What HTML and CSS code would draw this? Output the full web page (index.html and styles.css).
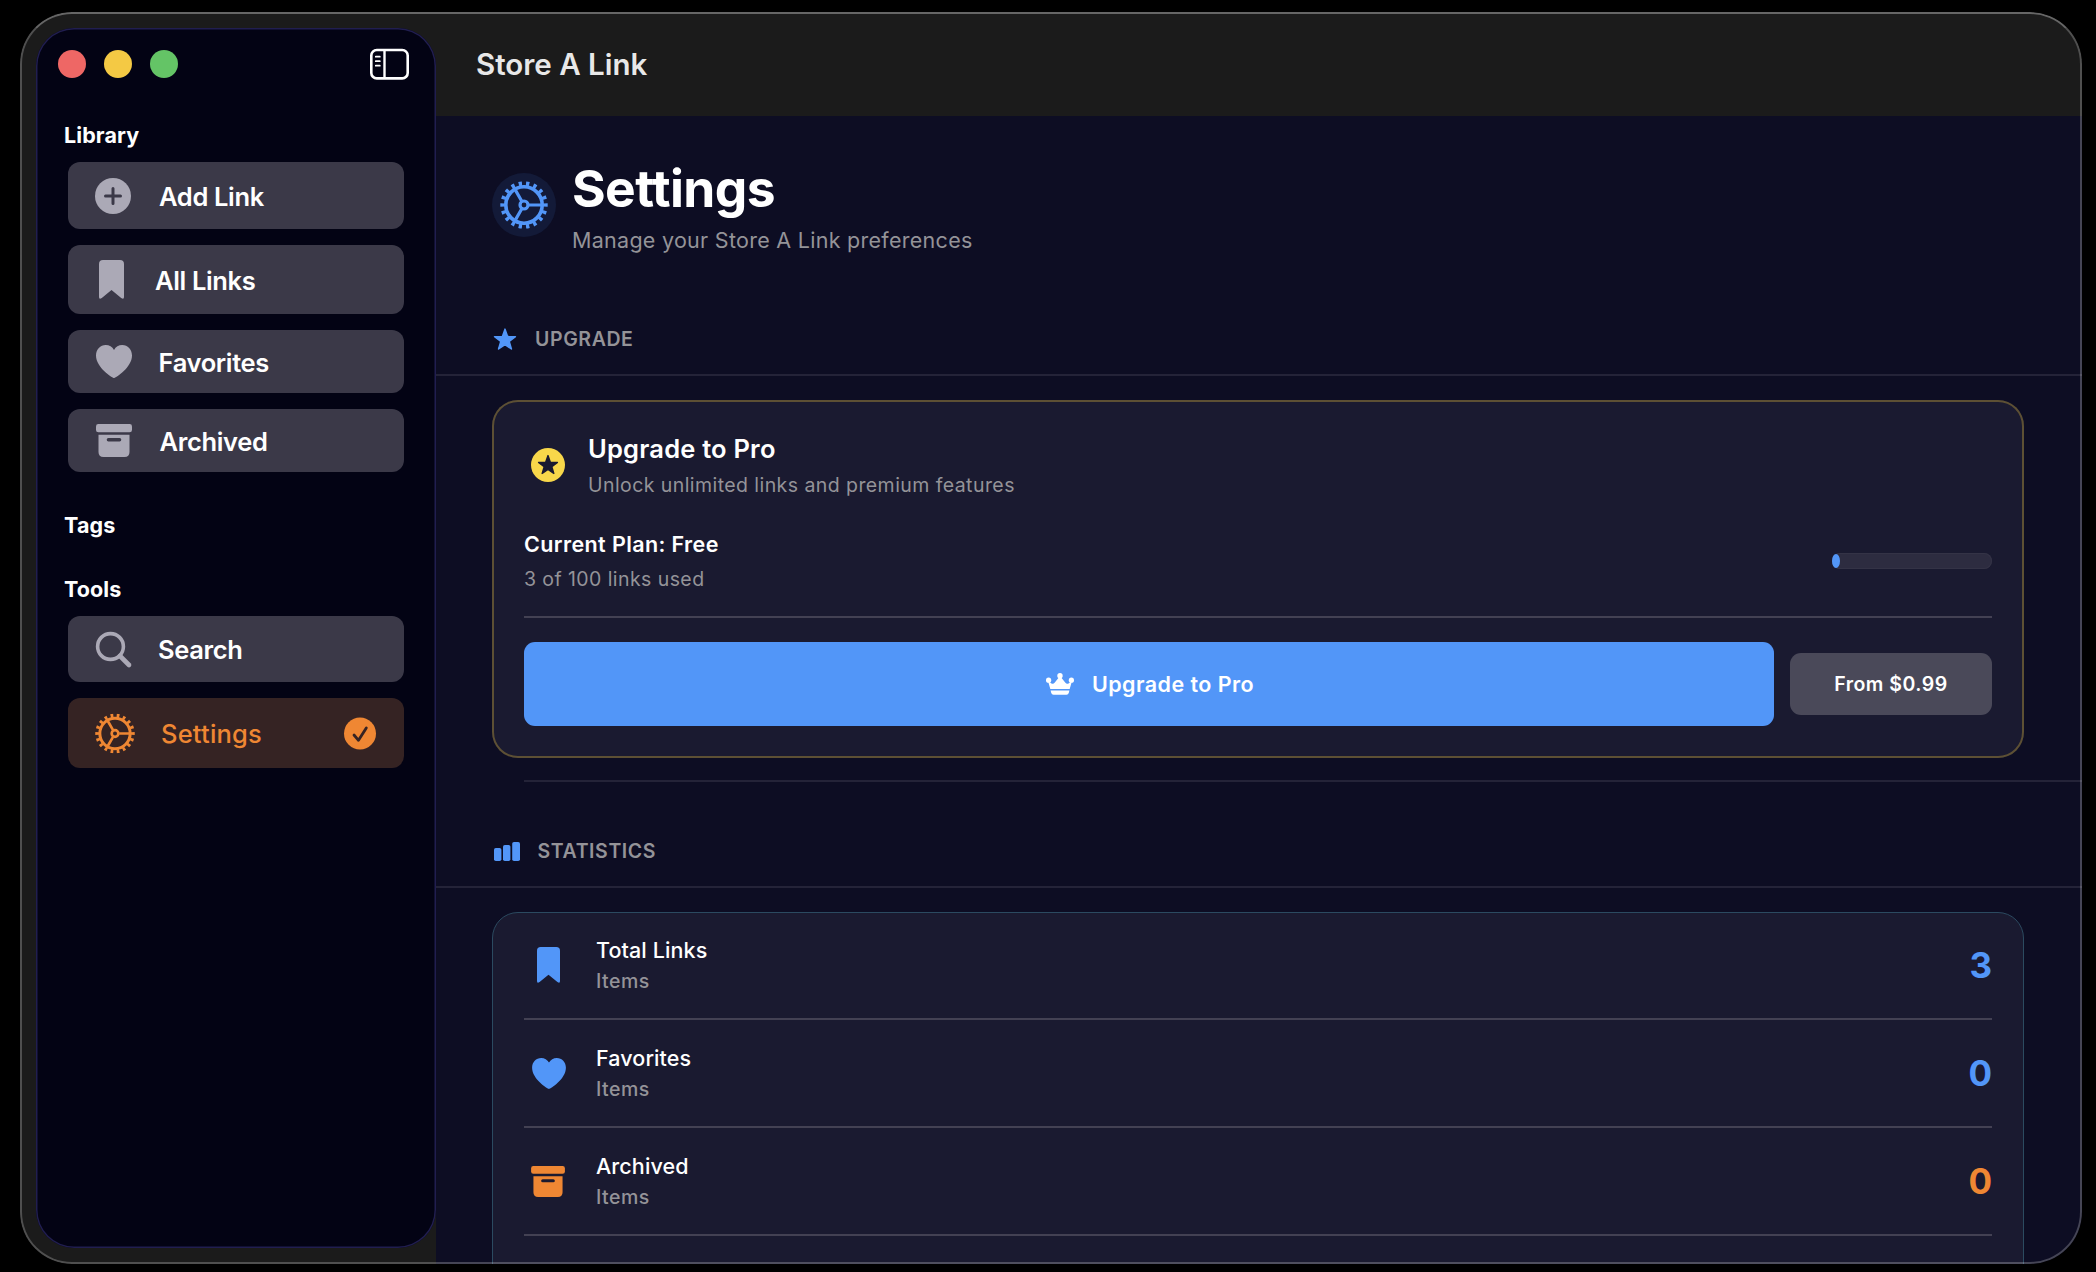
FILE: index.html
```html
<!DOCTYPE html>
<html lang="en">
<head>
  <meta charset="UTF-8" />
  <meta name="viewport" content="width=device-width, initial-scale=1.0"/>
  <title>Store A Link</title>
  <link rel="stylesheet" href="styles.css">
</head>
<body>
  <!-- shared icons -->
  <svg class="sprite" width="0" height="0">
    <symbol id="gear" viewBox="0 0 48 48">
      <g fill="none" stroke="currentColor">
        <circle cx="24" cy="24" r="18.2" stroke-width="3.600"/>
        <circle cx="24" cy="24" r="21.4" stroke-width="4.600" pathLength="180" stroke-dasharray="4.4 5.6" stroke-dashoffset="2.2"/>
        <circle cx="24" cy="24" r="4" stroke-width="3.200"/>
        <path d="M29 24h13M21.5 19.700L15 8.400M21.5 28.300L15 39.600" stroke-width="3.200"/>
      </g>
    </symbol>
    <symbol id="bookmark" viewBox="0 0 25 39">
      <path fill="currentColor" d="M4 0h17q4 0 4 4v33q0 3-2.800 1L12.500 30 2.800 38Q0 40 0 37V4q0-4 4-4z"/>
    </symbol>
    <symbol id="heart" viewBox="0 0 36 33">
      <path fill="currentColor" d="M18 33C16.500 33 0 22.500 0 10.500 0 4.200 4.300 0 9.700 0c3.600 0 6.600 1.900 8.300 4.900C19.700 1.900 22.700 0 26.300 0 31.700 0 36 4.200 36 10.500 36 22.500 19.500 33 18 33z"/>
    </symbol>
    <symbol id="archive" viewBox="0 0 36 33">
      <rect x="0" y="0" width="36" height="8.300" rx="2.400" fill="currentColor"/>
      <path fill="currentColor" fill-rule="evenodd" d="M2.500 10.800h31V28q0 5-5 5h-21q-5 0-5-5zM12.400 14a1.700 1.700 0 0 0 0 3.400h11.200a1.700 1.700 0 0 0 0-3.400z"/>
    </symbol>
    <symbol id="star" viewBox="0 0 24 23">
      <path fill="currentColor" stroke="currentColor" stroke-width="1.600" stroke-linejoin="round" d="M12 1.200l2.700 7.700 8.200.2-6.500 5 2.300 7.800L12 17.300l-6.700 4.600 2.300-7.800-6.500-5 8.200-.2z"/>
    </symbol>
  </svg>

  <div class="window">
    <aside class="sidebar">
      <div class="titlebar">
        <div class="lights">
          <span class="light red"></span>
          <span class="light yellow"></span>
          <span class="light green"></span>
        </div>
        <svg width="39" height="31" viewBox="0 0 39 31" fill="none" stroke="#fff">
          <rect x="1.300" y="1" width="36.400" height="28.400" rx="5.500" stroke-width="2.600"/>
          <path d="M14.500 1.200v28" stroke-width="2.400"/>
          <path d="M5.800 7.700h4M5.800 12.200h4M5.800 16.700h4" stroke-width="1.800" stroke-linecap="round"/>
        </svg>
      </div>

      <h3 class="label">Library</h3>
      <nav class="nav">
        <a class="item h67">
          <svg width="36" height="36" viewBox="0 0 36 36">
            <circle cx="18" cy="18" r="18" fill="currentColor"/>
            <path d="M18 10.500v15M10.500 18h15" stroke="#3b3948" stroke-width="3" stroke-linecap="round"/>
          </svg>
          <span>Add Link</span>
        </a>
        <a class="item h69">
          <svg width="32" height="39"><use href="#bookmark" x="4" width="25" height="39"/></svg>
          <span>All Links</span>
        </a>
        <a class="item h63">
          <svg width="35.500" height="33"><use href="#heart" x="1" width="36" height="33"/></svg>
          <span>Favorites</span>
        </a>
        <a class="item h63">
          <svg width="36.500" height="33"><use href="#archive" x="1" width="36" height="33"/></svg>
          <span>Archived</span>
        </a>
      </nav>

      <h3 class="label tags">Tags</h3>
      <h3 class="label tools">Tools</h3>
      <nav class="nav">
        <a class="item h66">
          <svg width="35" height="35" viewBox="0 0 35 35" fill="none" stroke="currentColor">
            <circle cx="15.500" cy="14.500" r="12.900" stroke-width="3.600"/>
            <path d="M25 24l9 9" stroke-width="4.600" stroke-linecap="round"/>
          </svg>
          <span>Search</span>
        </a>
        <a class="item active">
          <svg width="38" height="40"><use href="#gear" y=".5" width="40" height="40"/></svg>
          <span>Settings</span>
          <svg class="check" width="32" height="32" viewBox="0 0 32 32">
            <circle cx="16" cy="16.500" r="16" fill="currentColor"/>
            <path d="M10 18l4.500 5.300 7.800-12.300" fill="none" stroke="#352323" stroke-width="2.800" stroke-linecap="round" stroke-linejoin="round"/>
          </svg>
        </a>
      </nav>
    </aside>

    <main class="main">
      <header class="header">Store A Link</header>

      <div class="content">
        <div class="page-head">
          <div class="badge"><svg width="48" height="48"><use href="#gear" width="48" height="48"/></svg></div>
          <div>
            <h1>Settings</h1>
            <p class="subtitle">Manage your Store A Link preferences</p>
          </div>
        </div>

        <h2 class="section">
          <svg width="27" height="22"><use href="#star" x="1" width="24" height="22"/></svg>
          <span>UPGRADE</span>
        </h2>
        <div class="card pro">
          <div class="row">
            <div class="icon">
              <svg width="34" height="34" viewBox="0 0 34 34">
                <circle cx="17" cy="17" r="17" fill="#f8d74a"/>
                <g color="#1a1930"><use href="#star" x="6.500" y="6.500" width="21" height="20"/></g>
              </svg>
            </div>
            <div>
              <div class="pro-title">Upgrade to Pro</div>
              <div class="pro-text">Unlock unlimited links and premium features</div>
            </div>
          </div>
          <div class="row plan">
            <div>
              <div class="plan-name">Current Plan: Free</div>
              <div class="plan-text">3 of 100 links used</div>
            </div>
            <div class="progress"><div class="bar"></div></div>
          </div>
          <div class="row buttons">
            <button class="btn-pro">
              <svg width="28" height="22" viewBox="0 0 28 22" fill="#fff">
                <circle cx="2.600" cy="7.200" r="2.600"/>
                <circle cx="14" cy="2.700" r="2.700"/>
                <circle cx="25.400" cy="7.200" r="2.600"/>
                <path d="M2 8l2.300 8h19.400L26 8l-3.500 2.500q-1.800 1-3.300-1L14.800 4h-1.600L8.800 9.500q-1.500 2-3.300 1z"/>
                <path d="M4.600 17.500h18.800l-.6 2.300q-.5 1.900-2.300 1.900h-13q-1.800 0-2.300-1.900z"/>
              </svg>
              <span>Upgrade to Pro</span>
            </button>
            <button class="btn-price">From $0.99</button>
          </div>
        </div>

        <h2 class="section stats">
          <svg width="29.500" height="20" viewBox="0 0 29.500 20" fill="currentColor">
            <rect x="2" y="7" width="7.400" height="13" rx="1.800"/>
            <rect x="11" y="4" width="7.400" height="16" rx="1.800"/>
            <rect x="20.200" y="1" width="7.800" height="19" rx="1.800"/>
          </svg>
          <span>STATISTICS</span>
        </h2>
        <div class="card list">
          <div class="stat">
            <div class="icon"><svg width="23" height="36"><use href="#bookmark" width="23" height="36"/></svg></div>
            <div>
              <div class="name">Total Links</div>
              <div class="unit">Items</div>
            </div>
            <div class="num">3</div>
          </div>
          <div class="stat">
            <div class="icon"><svg width="34" height="31"><use href="#heart" x="1" width="34" height="31"/></svg></div>
            <div>
              <div class="name">Favorites</div>
              <div class="unit">Items</div>
            </div>
            <div class="num">0</div>
          </div>
          <div class="stat orange">
            <div class="icon"><svg width="34" height="31"><use href="#archive" width="34" height="31"/></svg></div>
            <div>
              <div class="name">Archived</div>
              <div class="unit">Items</div>
            </div>
            <div class="num">0</div>
          </div>
        </div>
      </div>
    </main>
  </div>
</body>
</html>
```
FILE: styles.css
```css
* {
  box-sizing: border-box;
}
body {
  margin: 0;
  height: 1272px;
  padding: 12px 14px 8px 20px;
  background: #000;
  font-family: Inter, "Liberation Sans", sans-serif;
  color: white;
  overflow: hidden;
}
h1, h2, h3, p {
  margin: 0;
}
svg {
  display: block;
  flex: none;
  overflow: visible;
}
.sprite {
  position: absolute;
}
.window {
  position: relative;
  display: flex;
  height: 1252px;
  background: #1b1b1b;
  border-radius: 52px;
  overflow: hidden;
}
/* window outline, drawn over the content */
.window::after {
  content: "";
  position: absolute;
  inset: 0;
  border: 2px solid rgba(255,255,255,0.23);
  border-top-color: rgba(255,255,255,0.33);
  border-radius: 52px;
  pointer-events: none;
}

/* Sidebar */
.sidebar {
  width: 400px;
  margin: 16px 0 16px 16px;
  background: #030314;
  border-radius: 38px;
  box-shadow: inset 0 0 0 1.5px #211e50;
}
.titlebar {
  display: flex;
  align-items: center;
  justify-content: space-between;
  height: 72px;
  padding: 0 27px 0 22px;
}
.lights {
  display: flex;
  gap: 18px;
}
.light {
  width: 28px;
  height: 28px;
  border-radius: 50%;
}
.red {
  background: #ee6765;
}
.yellow {
  background: #f4c944;
}
.green {
  background: #64c466;
}
.label {
  margin: 21px 28px 13px;
  font-size: 21.5px;
  font-weight: 700;
  line-height: 28px;
  letter-spacing: 0.1px;
}
.tags {
  margin-top: 39px;
  margin-bottom: 0;
}
.tools {
  margin-top: 36px;
  margin-bottom: 13px;
}
.nav {
  display: flex;
  flex-direction: column;
  gap: 16px;
  padding: 0 32px;
}
.item {
  display: flex;
  align-items: center;
  gap: 28px;
  padding: 0 28px 0 27px;
  border-radius: 12px;
  background: #3b3948;
  color: #aba9b6;
  font-size: 25.5px;
  font-weight: 600;
  letter-spacing: -0.35px;
}
.item span {
  padding-top: 1px;
  color: white;
}
.h63 {
  height: 63px;
}
.h66 {
  height: 66px;
}
.h67 {
  height: 67px;
}
.h69 {
  height: 69px;
}
.active {
  height: 70px;
  background: #352323;
  color: #ef8733;
  font-weight: 500;
  letter-spacing: 0.2px;
}
.active span {
  color: #ef8733;
}
.check {
  margin-left: auto;
}

/* Main */
.main {
  flex: 1;
  display: flex;
  flex-direction: column;
}
.header {
  height: 104px;
  padding-left: 40px;
  line-height: 104px;
  font-size: 29.5px;
  font-weight: 600;
  color: #e8e8e8;
}
.content {
  flex: 1;
  min-height: 0;
  padding-top: 40px;
  background: #0d0d23;
  overflow: hidden;
}
.page-head {
  display: flex;
  align-items: center;
  gap: 16px;
  padding-left: 56px;
}
.badge {
  display: flex;
  align-items: center;
  justify-content: center;
  width: 64px;
  height: 64px;
  border-radius: 50%;
  background: #131a38;
  color: #5296f8;
}
h1 {
  margin-bottom: 7px;
  padding-top: 1px;
  font-size: 51.5px;
  font-weight: 700;
  line-height: 62px;
  letter-spacing: -0.6px;
}
.subtitle {
  font-size: 21.5px;
  line-height: 28px;
  letter-spacing: 0.28px;
  color: #949398;
}
.section {
  display: flex;
  align-items: center;
  gap: 16px;
  margin-top: 73px;
  padding: 0 0 23px 56px;
  border-bottom: 2px solid #242338;
  color: #5296f8;
  font-size: 19.5px;
  font-weight: 600;
  line-height: 24px;
  letter-spacing: 0.6px;
}
.section span {
  color: #949398;
}
.stats {
  position: relative;
  margin-top: 22px;
  padding-top: 59px;
}
.stats::before {
  content: "";
  position: absolute;
  top: 0;
  left: 88px;
  right: 0;
  height: 2px;
  background: #242338;
}
.card {
  margin: 24px 58px 0 56px;
  padding: 32px;
  border-radius: 26px;
  background: #1a1a30;
}
.pro {
  box-shadow: inset 0 0 0 2px #5d5034;
}
.row {
  display: flex;
  align-items: center;
}
.icon {
  display: flex;
  justify-content: center;
  width: 48px;
}
.pro-title {
  margin: 0 0 6px 16px;
  font-size: 25.5px;
  font-weight: 600;
  line-height: 34px;
  letter-spacing: 0.2px;
}
.pro-text {
  margin-left: 16px;
  font-size: 19.5px;
  line-height: 26px;
  letter-spacing: 0.43px;
  color: #949398;
}
.plan {
  justify-content: space-between;
  margin-top: 32px;
  padding-bottom: 24px;
  border-bottom: 2px solid #434153;
}
.plan-name {
  margin-bottom: 8px;
  font-size: 21.5px;
  font-weight: 600;
  line-height: 28px;
  letter-spacing: 0.4px;
}
.plan-text {
  font-size: 19.5px;
  line-height: 26px;
  letter-spacing: 0.42px;
  color: #949398;
}
.progress {
  width: 160px;
  height: 16px;
  border-radius: 8px;
  background: #2d2c40;
  box-shadow: inset 0 0 0 1px #343346;
}
.bar {
  width: 8px;
  height: 14px;
  margin-top: 1px;
  border-radius: 50%;
  background: #5296f8;
}
.buttons {
  gap: 16px;
  margin-top: 24px;
}
button {
  border: none;
  border-radius: 11px;
  color: white;
  font-family: inherit;
  font-weight: 600;
}
.btn-pro {
  flex: 1;
  display: flex;
  align-items: center;
  justify-content: center;
  gap: 18px;
  height: 84px;
  padding-left: 8px;
  background: #5296f8;
  font-size: 21.5px;
  letter-spacing: 0.45px;
}
.btn-price {
  width: 202px;
  height: 62px;
  background: #4a4959;
  font-size: 19.5px;
  letter-spacing: 0.5px;
}
.list {
  height: 460px;
  padding: 0 31px;
  border: 1px solid #2b4a60;
}
.stat {
  display: flex;
  align-items: center;
  padding: 24px 0;
  border-bottom: 2px solid #434153;
  color: #5296f8;
}
.stat:first-child {
  padding-top: 23px;
}
.stat .icon {
  margin-right: 24px;
}
.orange {
  color: #ef8733;
}
.name {
  margin-bottom: 4px;
  font-size: 21.5px;
  font-weight: 500;
  line-height: 28px;
  letter-spacing: 0.1px;
  color: white;
}
.unit {
  font-size: 19.5px;
  font-weight: 500;
  line-height: 26px;
  letter-spacing: 0.5px;
  color: #949398;
}
.num {
  margin-left: auto;
  font-size: 35px;
  font-weight: 700;
}
```
